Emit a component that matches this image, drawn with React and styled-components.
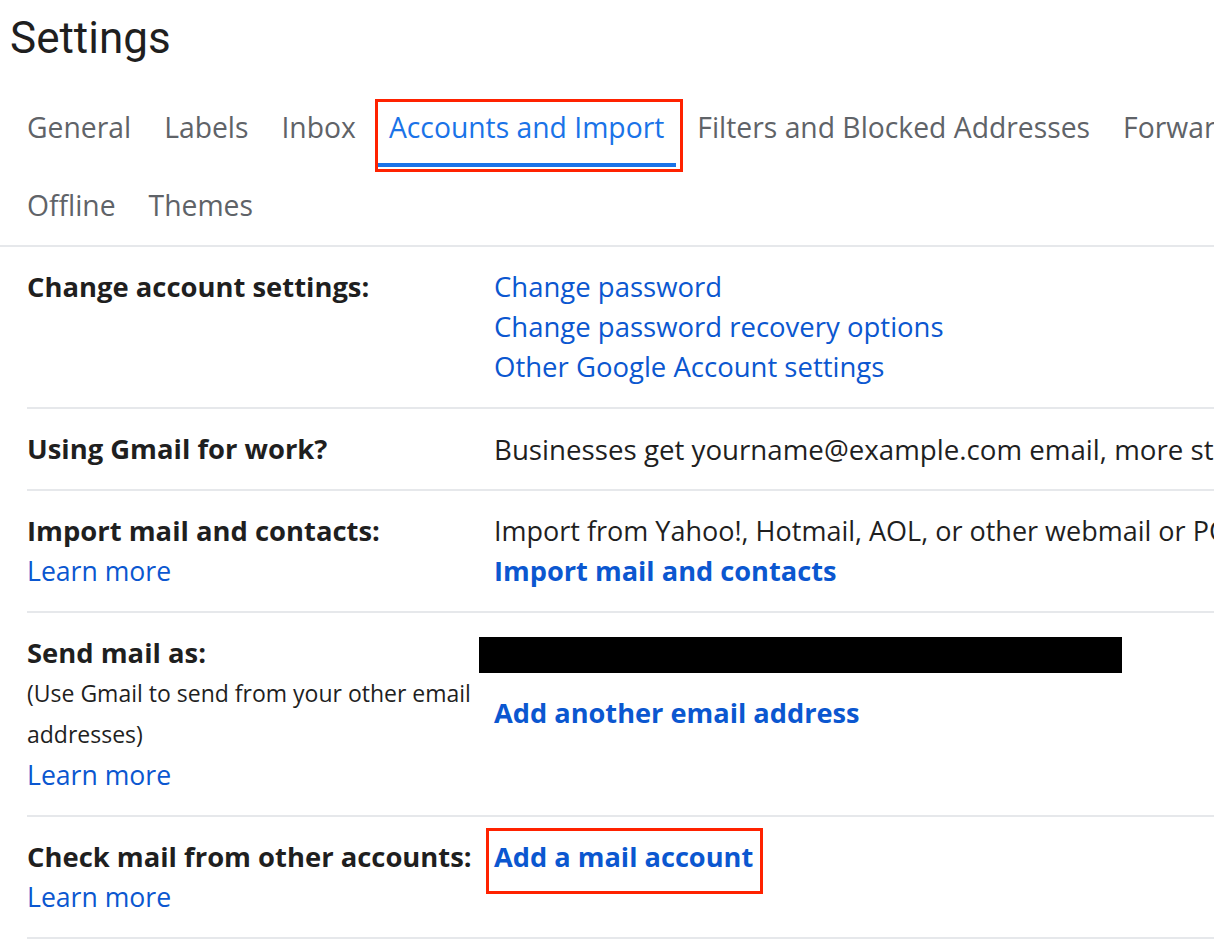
import React from 'react';
import styled, { createGlobalStyle } from 'styled-components';

const GlobalStyle = createGlobalStyle`
  html, body {
    margin: 0;
    padding: 0;
    background: #fff;
    overflow: hidden;
  }
  body {
    font-family: 'Open Sans', Roboto, Arial, sans-serif;
    color: #1f1f1f;
  }
`;

const tabRows = [
  ['General', 'Labels', 'Inbox', 'Accounts and Import', 'Filters and Blocked Addresses', 'Forwarding and POP/IMAP', 'Add-ons'],
  ['Offline', 'Themes'],
];

const App = () => {
  return (
    <Page>
      <GlobalStyle />
      <Title>Settings</Title>
      <Tabs>
        {tabRows.map((row, i) => (
          <TabRow key={i}>
            {row.map((name) => (
              <Tab key={name} active={name === 'Accounts and Import'}>
                {name}
                {name === 'Accounts and Import' && <Callout $tab />}
              </Tab>
            ))}
          </TabRow>
        ))}
      </Tabs>

      <Table>
        <Row>
          <Label>Change account settings:</Label>
          <Value>
            <Link>Change password</Link>
            <Link>Change password recovery options</Link>
            <Link>Other Google Account settings</Link>
          </Value>
        </Row>

        <Row>
          <Label>Using Gmail for work?</Label>
          <Value>
            <Text>
              Businesses get yourname@example.com email, more storage, and admin tools with Google Workspace.
            </Text>
          </Value>
        </Row>

        <Row>
          <Label>
            Import mail and contacts:
            <Link>Learn more</Link>
          </Label>
          <Value>
            <Text narrow>Import from Yahoo!, Hotmail, AOL, or other webmail or POP3 accounts.</Text>
            <Link bold>Import mail and contacts</Link>
          </Value>
        </Row>

        <Row>
          <Label>
            Send mail as:
            <Note>(Use Gmail to send from your other email addresses)</Note>
            <Link>Learn more</Link>
          </Label>
          <Value>
            <Redacted />
            <Link bold>Add another email address</Link>
          </Value>
        </Row>

        <Row>
          <Label>
            Check mail from other accounts:
            <Link>Learn more</Link>
          </Label>
          <Value>
            <Boxed>
              <Link bold>Add a mail account</Link>
              <Callout />
            </Boxed>
          </Value>
        </Row>
      </Table>
    </Page>
  );
};

export default App;

const Page = styled.div`
  width: 100%;
  min-height: 942px;
  overflow: hidden;
`;

const Title = styled.h1`
  margin: 0;
  height: 89px;
  padding: 12px 0 0 10px;
  box-sizing: border-box;
  font-family: Roboto, 'Open Sans', Arial, sans-serif;
  font-size: 44px;
  font-weight: 400;
  line-height: 52px;
  color: #1f1f1f;
`;

const Tabs = styled.div`
  padding-left: 15px;
  border-bottom: 2px solid #e6e8eb;
`;

const TabRow = styled.div`
  display: flex;
  gap: 9px;
  white-space: nowrap;
`;

const Tab = styled.div`
  position: relative;
  height: 78px;
  box-sizing: border-box;
  padding: 2px 12px 0;
  display: flex;
  align-items: center;
  font-size: 28.3px;
  color: ${(p) => (p.active ? '#1a73e8' : '#5f6368')};
  border-bottom: 4px solid ${(p) => (p.active ? '#1a73e8' : 'transparent')};
`;

const Callout = styled.span`
  position: absolute;
  border: 3px solid #ff2200;
  pointer-events: none;
  ${(p) =>
    p.$tab
      ? `left: -2px; right: -7px; top: 10px; bottom: -9px;`
      : `left: -8px; right: -10px; top: -9px; bottom: -17px;`}
`;

const Table = styled.div`
  padding-left: 27px;
`;

const Row = styled.div`
  display: grid;
  grid-template-columns: 467px 1fr;
  padding: 20px 0;
  border-bottom: 2px solid #e6e8eb;
  line-height: 40px;
`;

const Label = styled.div`
  display: flex;
  flex-direction: column;
  font-size: 27.4px;
  font-weight: 700;
  color: #1f1f1f;
  white-space: nowrap;

  a {
    font-size: 26.6px;
  }
`;

const Note = styled.span`
  font-size: 23px;
  font-weight: 400;
  line-height: 41px;
  color: #1f1f1f;
  white-space: normal;
  width: 452px;
`;

const Value = styled.div`
  display: flex;
  flex-direction: column;
  align-items: flex-start;
  white-space: nowrap;
`;

const Text = styled.span`
  color: #1f1f1f;
  font-size: ${(p) => (p.narrow ? '27px' : '27.7px')};
  font-weight: 400;
`;

const Link = styled.a`
  color: #0b57d0;
  font-size: ${(p) => (p.bold ? '27.2px' : '27.5px')};
  font-weight: ${(p) => (p.bold ? 700 : 400)};
  text-decoration: none;
  cursor: pointer;
`;

const Redacted = styled.div`
  width: 643px;
  height: 36px;
  margin: 4px 0 20px -15px;
  background: #000;
`;

const Boxed = styled.div`
  position: relative;
  display: flex;
`;
